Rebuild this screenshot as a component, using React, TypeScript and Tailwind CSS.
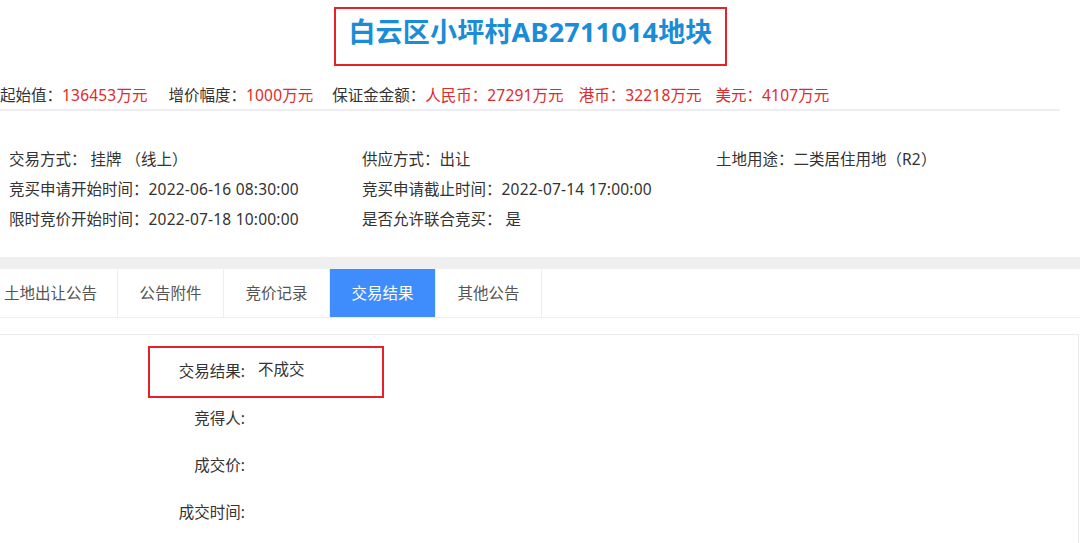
import React from "react";

const font = { fontFamily: '"Noto Sans", "Noto Sans CJK SC", sans-serif' };

function N({ children }: { children: React.ReactNode }) {
  return <span className="tracking-[0.2px]">{children}</span>;
}

export default function App() {
  const tabs = ["土地出让公告", "公告附件", "竞价记录", "交易结果", "其他公告"];
  return (
    <div className="w-[1080px] h-[543px] overflow-hidden bg-white text-[15.5px] text-[#333]" style={font}>
      {/* Title */}
      <div className="flex pt-[7px] pl-[334px]">
        <div className="w-[393px] h-[59px] border-2 border-[#e8202a] flex justify-center pt-[5px]">
          <h1 className="text-[27px] font-bold leading-[36px] text-[#1a8cd8] whitespace-nowrap tracking-[0.2px]">白云区小坪村AB2711014地块</h1>
        </div>
      </div>

      {/* Price row */}
      <div className="flex items-center h-[20px] mt-[19px] leading-[20px] whitespace-nowrap">
        <span>起始值：</span>
        <span className="text-[#e02a2a]"><N>136453</N>万元</span>
        <span className="ml-[21px]">增价幅度：</span>
        <span className="text-[#e02a2a]"><N>1000</N>万元</span>
        <span className="ml-[19px]">保证金金额：</span>
        <span className="text-[#e02a2a]">人民币：<N>27291</N>万元</span>
        <span className="text-[#e02a2a] ml-[15px]">港币：<N>32218</N>万元</span>
        <span className="text-[#e02a2a] ml-[14px]">美元：<N>4107</N>万元</span>
      </div>
      <div className="mt-[4px] h-[2px] w-[1060px] bg-[#ededf2]" />

      {/* Info grid */}
      <div className="mt-[34px] pl-[9px]">
        <div className="grid grid-cols-[353px_354px_1fr] auto-rows-[30px] items-center whitespace-nowrap">
          <div>交易方式：&nbsp;挂牌 （线上）</div>
          <div>供应方式：出让</div>
          <div>土地用途：二类居住用地（<N>R2</N>）</div>
          <div>竞买申请开始时间：<N>2022-06-16 08:30:00</N></div>
          <div>竞买申请截止时间：<N>2022-07-14 17:00:00</N></div>
          <div />
          <div>限时竞价开始时间：<N>2022-07-18 10:00:00</N></div>
          <div>是否允许联合竞买：&nbsp;是</div>
          <div />
        </div>
      </div>

      {/* Gray band */}
      <div className="mt-[22px] h-[12px] bg-[#efefef]" />

      {/* Tabs */}
      <div className="flex h-[49px] border-b border-[#eceef3]">
        {tabs.map((t, i) => {
          const active = i === 3;
          const base =
            "flex items-center h-full pt-[2px] text-[15.5px] whitespace-nowrap border-r border-[#eceef3] " +
            (i === 0 ? "w-[118px] pl-[4px] " : "w-[106px] justify-center ") +
            (active ? "bg-[#3f8cfd] text-white" : "text-[#555]");
          return (
            <div key={t} className={base}>
              {t}
            </div>
          );
        })}
      </div>

      {/* Content box */}
      <div className="mt-[16px] w-[1079px] h-[300px] border-t border-r border-[#ececf0] pt-[13px]">
        <div className="relative">
          <div className="absolute left-[148px] top-[-2px] w-[236px] h-[52px] border-2 border-[#e8202a]" />
          <div className="flex h-[47px] items-center">
            <div className="w-[245px] text-right">交易结果:</div>
            <div className="ml-[13px] mt-[-4px]">不成交</div>
          </div>
          <div className="flex h-[47px] items-center">
            <div className="w-[245px] text-right">竞得人:</div>
          </div>
          <div className="flex h-[47px] items-center">
            <div className="w-[245px] text-right">成交价:</div>
          </div>
          <div className="flex h-[47px] items-center">
            <div className="w-[245px] text-right">成交时间:</div>
          </div>
        </div>
      </div>
    </div>
  );
}
